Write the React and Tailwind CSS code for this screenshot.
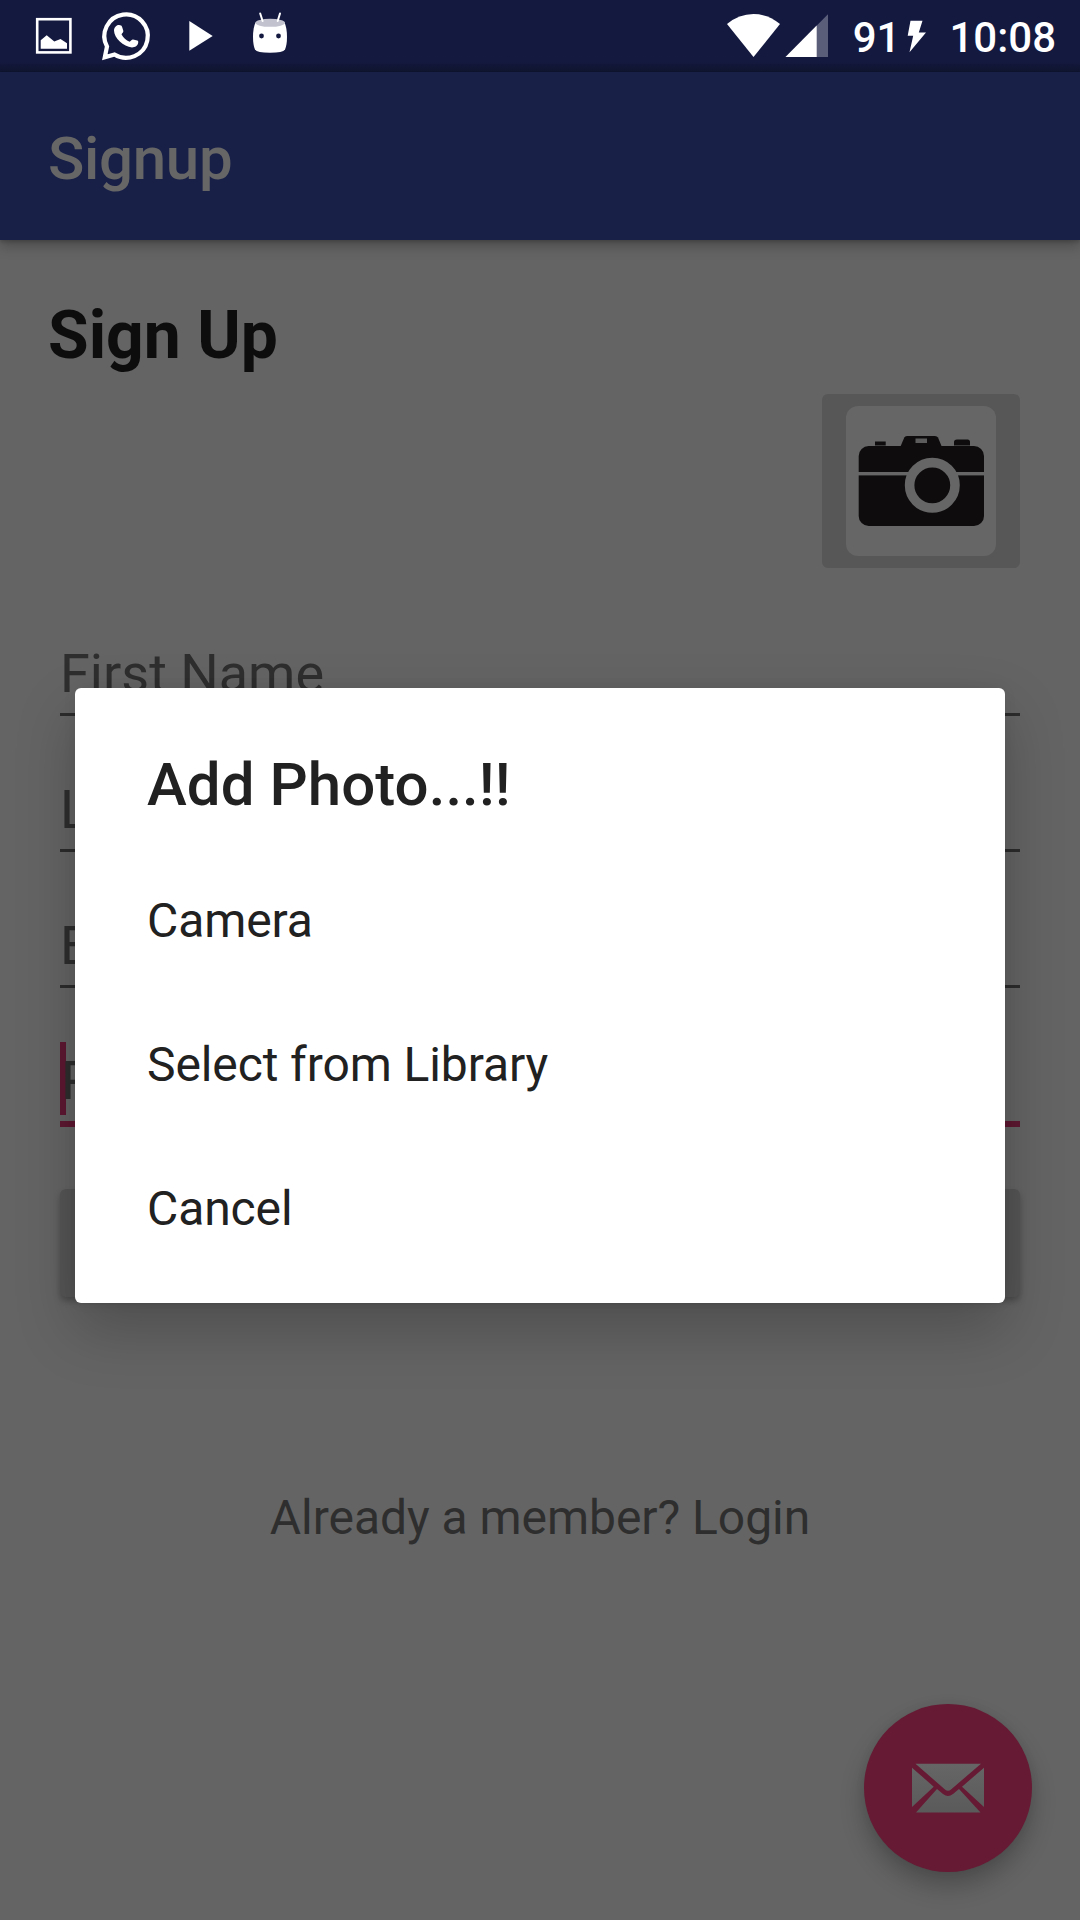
const fields = ['First Name', 'L', 'E'];

function StatusBar() {
  return (
    <header className="flex h-[72px] items-start justify-between bg-linear-to-b from-[#141940] from-85% to-[#10152f] text-white">
      <svg width="300" height="72" viewBox="0 0 300 72" fill="#fff">
        <rect x="37.2" y="19.2" width="33.2" height="33.2" fill="none" stroke="#fff" strokeWidth="2.6" />
        <path d="M40.7 40.3L46.7 35.3L54.3 41.5L60.5 39L67 43.2V48.7H40.7Z" />
        <g transform="translate(102 12)">
          <path d="M12.5 42.5A21.7 21.7 0 1 0 5 34.5L2.8 45.3Z" fill="none" stroke="#fff" strokeWidth="4.2" />
          <path d="M18.2 13.2C19.5 13.2 19.8 14 20.2 15.2L21.3 18.8C21.7 20 20.5 21 19.5 22.3C21.3 25.8 24 28.2 27.7 29.8C29 28.7 30 27.2 31 27.4L35.2 28.6C36.3 29 36.3 29.5 36.2 30.8C35.8 33.8 33 35.4 30 35.4C21.5 34.5 12 26 12 18.5C12 15.5 14.5 12.8 17 13Z" />
        </g>
        <path d="M189.3 21L212.7 36L189.3 50.7Z" />
        <path d="M255.5 22.5H284.5Q287 28 287 37Q287 45 285 49.5Q283 52.8 270 52.8Q257 52.8 255 49.5Q253 45 253 37Q253 28 255.5 22.5Z" />
        <ellipse cx="270.2" cy="22.8" rx="14.8" ry="4" fill="#c1c2ce" />
        <path d="M260.2 13.5L262.6 21M280 13.5L277.7 21" stroke="#fff" strokeWidth="2" strokeLinecap="round" />
        <circle cx="261.5" cy="36" r="2.4" fill="#141940" />
        <circle cx="278.5" cy="36" r="2.4" fill="#141940" />
      </svg>
      <div className="flex items-start pr-[24px] text-[42px] leading-[76px] font-medium">
        <svg className="mr-[24px]" width="102" height="72" viewBox="727 0 102 72" fill="#fff">
          <path d="M727 24Q739 14 753.5 14T780 24L753.5 57Z" />
          <path d="M785.5 57L828 14.3V57Z" opacity="0.3" />
          <path d="M785.5 57L816.7 25.6V57Z" />
        </svg>
        <span>91</span>
        <svg className="mr-[22px] ml-[7px]" width="20" height="72" viewBox="907.5 0 20 72" fill="#fff">
          <path d="M911 20.7H923L919.3 32.5H926.5L910 52.2L913.7 35.8H908.2Z" />
        </svg>
        <span>10:08</span>
      </div>
    </header>
  );
}

function CameraIcon() {
  return (
    <svg width="150" height="150" viewBox="0 0 150 150" fill="#0e0c0d">
      <rect x="12.7" y="40" width="125.3" height="80" rx="10" />
      <path d="M54.7 40L58.3 31.5Q59 30 61 30H89Q91 30 92 31.5L95.5 40Z" />
      <rect x="69.5" y="32.5" width="11.5" height="4.5" fill="#5c5c5c" />
      <rect x="29" y="35.5" width="10.7" height="4" />
      <path d="M108 39.5V36Q108 33.5 111 33.5H121.5Q124 33.5 124 36V39.5Z" />
      <rect x="12" y="66" width="127" height="3.4" fill="#666" />
      <circle cx="86.3" cy="79.3" r="22.7" stroke="#666" strokeWidth="9.6" />
    </svg>
  );
}

function Dialog() {
  return (
    <section
      role="dialog"
      className="absolute top-[688px] left-[75px] flex h-[615px] w-[930px] flex-col rounded-[6px] bg-white px-[72px] pt-[54px] text-[#212121] shadow-[0_26px_60px_rgba(0,0,0,0.22),0_0_14px_rgba(0,0,0,0.06)]"
    >
      <h2 className="h-[107px] text-[60px] leading-[86px] font-medium tracking-[0.04px]">Add Photo...!!</h2>
      <ul className="text-[48px] leading-[144px] tracking-[-0.1px]">
        <li>Camera</li>
        <li>Select from Library</li>
        <li>Cancel</li>
      </ul>
    </section>
  );
}

export default function App() {
  return (
    <div className="relative flex h-[1920px] w-[1080px] flex-col overflow-hidden bg-[#646464] font-[Roboto,sans-serif]">
      <StatusBar />
      <div className="flex h-[168px] items-center bg-[#192048] px-[48px] pt-[5px] text-[60px] font-medium tracking-[-0.3px] text-[#666] shadow-[0_6px_12px_rgba(0,0,0,0.25),0_2px_3px_rgba(0,0,0,0.15)]">
        <h1 className="leading-[60px]">Signup</h1>
      </div>
      <main className="flex flex-1 flex-col px-[60px] pt-[61px]">
        <h2 className="-ml-[12px] h-[93px] text-[66px] leading-[70px] font-bold text-[#0d0d0d]">Sign Up</h2>
        <button className="flex h-[174px] w-[198px] items-center justify-center self-end rounded-[6px] bg-[#575757]">
          <span className="rounded-[12px] bg-[#666]">
            <CameraIcon />
          </span>
        </button>
        <form className="mt-[12px] flex flex-col text-[54px] leading-[70px] text-[#2e2e2e]">
          {fields.map((name) => (
            <div key={name} className="flex h-[136px] flex-col justify-end border-b-[3px] border-[#2c2c2c] pb-[4px]">
              <span>{name}</span>
            </div>
          ))}
          <div className="flex h-[139px] flex-col justify-end border-b-[6px] border-[#5d1730] pb-[6px]">
            <div className="flex h-[73px] border-l-[6px] border-[#5d1730] pt-[4px]">
              <span className="-ml-[5px]">P</span>
            </div>
          </div>
          <button
            type="button"
            aria-label="Sign up"
            className="mt-[62px] h-[108px] rounded-[6px] bg-[#555] shadow-[0_4px_6px_rgba(0,0,0,0.25)]"
          />
        </form>
        <p className="mt-[185px] text-center text-[48px] leading-[72px] tracking-[-0.04px] text-[#2e2e2e]">
          Already a member? Login
        </p>
      </main>
      <button className="absolute right-[48px] bottom-[48px] flex size-[168px] items-center justify-center rounded-full bg-[#661a33] shadow-[0_14px_24px_rgba(0,0,0,0.24),0_0_10px_rgba(0,0,0,0.06)]">
        <svg width="72" height="50" viewBox="0 0 72 50">
          <defs>
            <linearGradient id="paper" x1="0" y1="0" x2="0" y2="50" gradientUnits="userSpaceOnUse">
              <stop stopColor="#666" />
              <stop offset="1" stopColor="#5a5a5a" />
            </linearGradient>
          </defs>
          <path
            fill="url(#paper)"
            d="M3.5 .7H69L39 26.5Q36 29 33 26.5ZM0 4.7L21.7 23.7L0 44ZM72 4.7L50 23.7L72 44ZM4 49.5L25 26L31 31Q36 35 41 31L47 26L68.5 49.5Z"
          />
        </svg>
      </button>
      <Dialog />
    </div>
  );
}
